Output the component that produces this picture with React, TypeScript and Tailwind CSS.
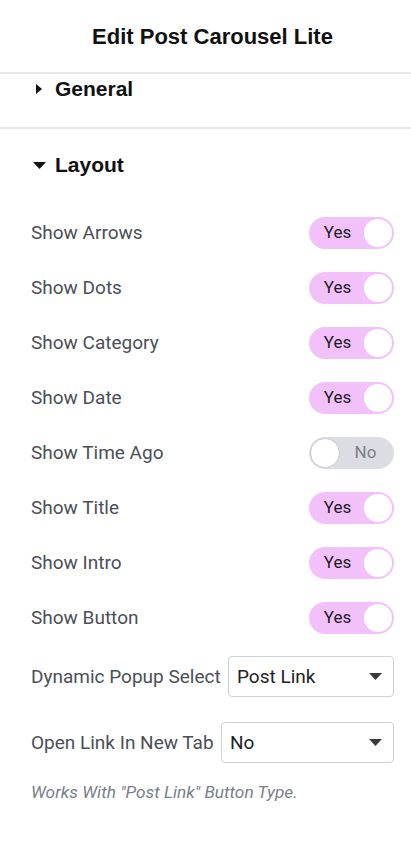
import React, { useState } from 'react';

const toggles: { label: string; on: boolean }[] = [
  { label: 'Show Arrows', on: true },
  { label: 'Show Dots', on: true },
  { label: 'Show Category', on: true },
  { label: 'Show Date', on: true },
  { label: 'Show Time Ago', on: false },
  { label: 'Show Title', on: true },
  { label: 'Show Intro', on: true },
  { label: 'Show Button', on: true },
];

function Toggle({ on, onClick }: { on: boolean; onClick: () => void }) {
  return (
    <button
      onClick={onClick}
      className={`relative w-[85px] h-[32px] rounded-full flex items-center ${
        on ? 'bg-[#f2c1fa]' : 'bg-[#dcdde2]'
      }`}
    >
      {on ? (
        <>
          <span className="w-[57px] text-center text-[17px] text-[#1b1b1f]">Yes</span>
          <span className="absolute right-[2px] top-[2px] h-[28px] w-[28px] rounded-full bg-white" />
        </>
      ) : (
        <>
          <span className="absolute left-[1px] top-[1px] h-[30px] w-[30px] rounded-full bg-white border border-[#c9cbd1]" />
          <span className="ml-auto w-[57px] text-center text-[17px] text-[#7b7e86]">No</span>
        </>
      )}
    </button>
  );
}

function Caret() {
  return (
    <svg width="13" height="7" viewBox="0 0 13 7">
      <path d="M0 0h13L6.5 7z" fill="#3a3a3e" />
    </svg>
  );
}

function App() {
  const [state, setState] = useState(toggles.map((t) => t.on));

  return (
    <div className="min-h-screen bg-white" style={{ fontFamily: 'Roboto, sans-serif' }}>
      {/* Header */}
      <header className="h-[72px] flex items-center justify-center pl-[14px] pt-[1px]">
        <h1 className="text-[22px] font-bold text-[#111]" style={{ fontFamily: '"Liberation Sans", Arial, sans-serif' }}>
          Edit Post Carousel Lite
        </h1>
      </header>

      <div className="border-t-2 border-[#e7e7eb]" />
      <div className="h-[53px] pt-[3px] pl-[36px] flex items-start">
        <div className="flex items-center h-[24px]" style={{ fontFamily: '"Liberation Sans", Arial, sans-serif' }}>
          <svg width="6" height="10" viewBox="0 0 6 10" className="mr-[13px]">
            <path d="M0 0l6 5-6 5z" fill="#111" />
          </svg>
          <span className="text-[21px] font-bold text-[#111]">General</span>
        </div>
      </div>
      <div className="border-t-2 border-[#e7e7eb]" />

      <main className="px-[31px] pr-[17px]">
        <div className="pt-[24px] flex items-center h-[48px] pl-[2px]" style={{ fontFamily: '"Liberation Sans", Arial, sans-serif' }}>
          <svg width="13" height="7" viewBox="0 0 13 7" className="mr-[9px]">
            <path d="M0 0h13L6.5 7z" fill="#111" />
          </svg>
          <span className="text-[21px] font-bold text-[#111]">Layout</span>
        </div>

        <div className="mt-[28px]">
          {toggles.map((t, i) => (
            <div key={t.label} className="h-[55px] flex items-center justify-between">
              <span className="text-[19px] text-[#4a4f57] pt-[2px]">{t.label}</span>
              <Toggle
                on={state[i]}
                onClick={() => setState((prev) => prev.map((v, j) => (j === i ? !v : v)))}
              />
            </div>
          ))}
        </div>

        <div className="mt-[11px] flex items-center justify-between">
          <span className="text-[19px] text-[#4a4f57] pt-[2px]">Dynamic Popup Select</span>
          <div className="w-[166px] h-[41px] border border-[#cdd0d6] rounded-[4px] flex items-center justify-between pl-[8px] pr-[11px]">
            <span className="text-[19px] text-[#222] pt-[1px]">Post Link</span>
            <Caret />
          </div>
        </div>

        <div className="mt-[25px] flex items-center justify-between">
          <span className="text-[19px] text-[#4a4f57] pt-[2px]">Open Link In New Tab</span>
          <div className="w-[173px] h-[41px] border border-[#cdd0d6] rounded-[4px] flex items-center justify-between pl-[8px] pr-[11px]">
            <span className="text-[19px] text-[#222] pt-[1px]">No</span>
            <Caret />
          </div>
        </div>

        <p className="mt-[17px] text-[17.3px] italic text-[#7b808a]">Works With "Post Link" Button Type.</p>
      </main>
    </div>
  );
}

export default App;
